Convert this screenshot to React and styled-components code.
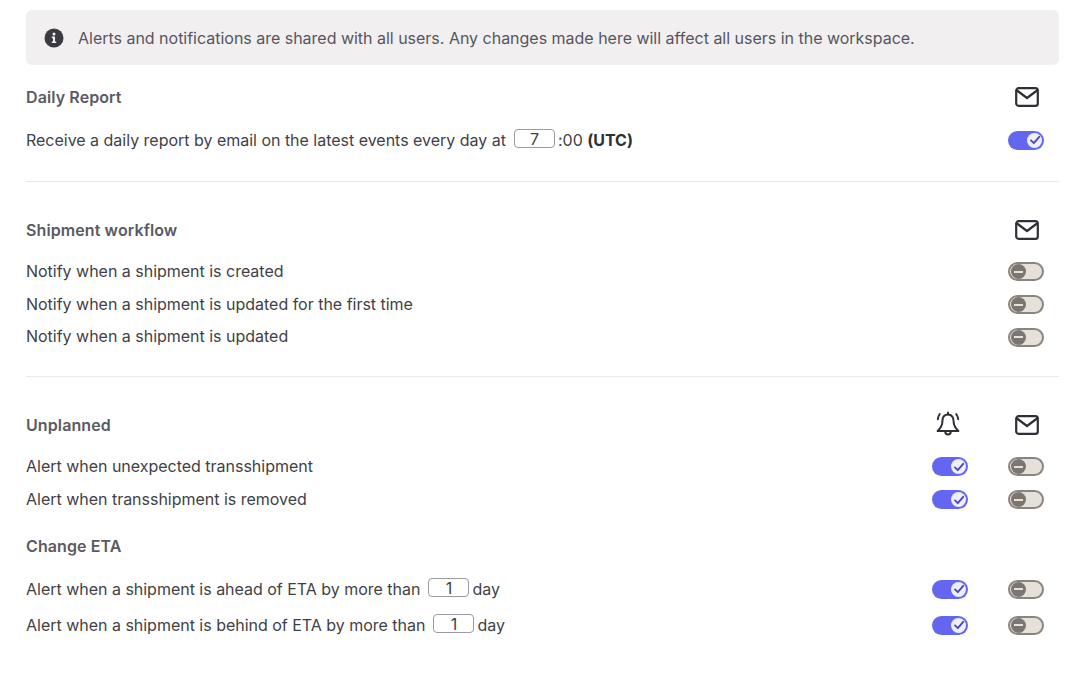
import React from 'react';
import styled, { createGlobalStyle } from 'styled-components';

const GlobalStyle = createGlobalStyle`
  html, body {
    margin: 0;
    padding: 0;
    background: #fff;
    font-family: Inter, "Liberation Sans", sans-serif;
  }
`;

function MailIcon() {
  return (
    <MailSvg width="24" height="20" viewBox="0 0 24 20" fill="none" stroke="#2f2f35" strokeWidth="2.2" strokeLinejoin="round" strokeLinecap="round">
      <rect x="1.2" y="1.2" width="21.6" height="17.6" rx="2.4" />
      <path d="M2 3.5 L12 11 L22 3.5" />
    </MailSvg>
  );
}

function BellIcon() {
  return (
    <BellSvg width="26" height="26" viewBox="0 0 26 26" fill="none" stroke="#2f2f35" strokeWidth="2" strokeLinejoin="round" strokeLinecap="round">
      <path d="M13 3.6 C9 3.6 7.4 6.8 7.4 10.4 C7.4 14.6 5.6 17 2.6 20 H23.4 C20.4 17 18.6 14.6 18.6 10.4 C18.6 6.8 17 3.6 13 3.6 Z" />
      <path d="M13 1.4 V3.6" />
      <path d="M10.2 20.2 C10.2 24.6 15.8 24.6 15.8 20.2" />
      <path d="M4.8 3 C3.6 4.6 3 6.2 2.8 8.2" />
      <path d="M21.2 3 C22.4 4.6 23 6.2 23.2 8.2" />
    </BellSvg>
  );
}

function InfoIcon() {
  return (
    <svg width="20" height="20" viewBox="0 0 20 20">
      <circle cx="10" cy="10" r="9.5" fill="#3a3a42" />
      <circle cx="10" cy="6" r="1.5" fill="#f1eff0" />
      <path d="M7.8 8.6 H11 V13.4 H12.2 V15 H7.8 V13.4 H9 V10.2 H7.8 Z" fill="#f1eff0" />
    </svg>
  );
}

function Toggle({ on }) {
  return (
    <ToggleTrack $on={on}>
      <ToggleKnob $on={on}>
        {on ? (
          <svg width="12" height="12" viewBox="0 0 12 12" fill="none" stroke="#4a45b8" strokeWidth="1.8" strokeLinecap="round" strokeLinejoin="round">
            <path d="M2 6.4 L4.8 9.2 L10.2 2.8" />
          </svg>
        ) : (
          <MinusBar />
        )}
      </ToggleKnob>
    </ToggleTrack>
  );
}

function Row({ children, bell, mail, h }) {
  return (
    <RowWrap $h={h}>
      <RowLabel>{children}</RowLabel>
      <Cell>{bell !== undefined && <Toggle on={bell} />}</Cell>
      <Cell>{mail !== undefined && <Toggle on={mail} />}</Cell>
    </RowWrap>
  );
}

function Heading({ children, bell, mail, h }) {
  return (
    <RowWrap $h={h}>
      <HeadingText>{children}</HeadingText>
      <Cell>{bell && <BellIcon />}</Cell>
      <Cell>{mail && <MailIcon />}</Cell>
    </RowWrap>
  );
}

export default function App() {
  return (
    <Page>
      <GlobalStyle />
      <Banner>
        <InfoIcon />
        <BannerText>Alerts and notifications are shared with all users. Any changes made here will affect all users in the workspace.</BannerText>
      </Banner>

      <Section $top={16} $bottom={26}>
        <Heading mail h={32}>Daily Report</Heading>
        <SubGap $h={10} />
        <Row mail={true} h={32}>
          Receive a daily report by email on the latest events every day at
          <NumBox $w={41}>7</NumBox>
          <Unit>:00</Unit> <Bold>(UTC)</Bold>
        </Row>
      </Section>

      <Section $top={32} $bottom={24}>
        <Heading mail h={32}>Shipment workflow</Heading>
        <SubGap $h={8} />
        <Row mail={false} h={33}>Notify when a shipment is created</Row>
        <Row mail={false} h={33}>Notify when a shipment is updated for the first time</Row>
        <Row mail={false} h={32}>Notify when a shipment is updated</Row>
      </Section>

      <Section $top={32} $bottom={0} $last>
        <Heading bell mail h={32}>Unplanned</Heading>
        <SubGap $h={8} />
        <Row bell={true} mail={false} h={33}>Alert when unexpected transshipment</Row>
        <Row bell={true} mail={false} h={33}>Alert when transshipment is removed</Row>
        <SubGap $h={15} />
        <Heading h={32}>Change ETA</Heading>
        <SubGap $h={8} />
        <Row bell={true} mail={false} h={36}>
          Alert when a shipment is ahead of ETA by more than
          <NumBox $w={41}>1</NumBox>
          <Unit>day</Unit>
        </Row>
        <Row bell={true} mail={false} h={36}>
          Alert when a shipment is behind of ETA by more than
          <NumBox $w={41}>1</NumBox>
          <Unit>day</Unit>
        </Row>
      </Section>
    </Page>
  );
}

const Page = styled.div`
  width: 1077px;
  height: 682px;
  box-sizing: border-box;
  padding: 10px 18px 0 26px;
  overflow: hidden;
  color: #3a3a42;
  font-size: 16px;
`;

const Banner = styled.div`
  display: flex;
  align-items: center;
  gap: 14px;
  height: 55px;
  box-sizing: border-box;
  padding: 0 18px;
  background: #f1eff0;
  border-radius: 6px;
`;

const BannerText = styled.span`
  font-size: 16px;
  letter-spacing: -0.015px;
  color: #56565e;
`;

const Section = styled.div`
  padding-top: ${(p) => p.$top}px;
  padding-bottom: ${(p) => p.$bottom}px;
  border-bottom: ${(p) => (p.$last ? 'none' : '1px solid #e9e9eb')};
`;

const SubGap = styled.div`
  height: ${(p) => p.$h}px;
`;

const RowWrap = styled.div`
  display: grid;
  grid-template-columns: 1fr 36px 36px;
  column-gap: 40px;
  align-items: center;
  height: ${(p) => p.$h}px;
  padding-right: 15px;
`;

const RowLabel = styled.div`
  font-size: 16px;
  letter-spacing: -0.015px;
  color: #3f3f47;
  white-space: nowrap;
`;

const HeadingText = styled.div`
  font-size: 16px;
  font-weight: 600;
  letter-spacing: 0.1px;
  color: #5a5a62;
`;

const Cell = styled.div`
  display: flex;
  justify-content: center;
  align-items: center;
`;

const MailSvg = styled.svg`
  margin-left: 1px;
`;

const BellSvg = styled.svg`
  margin-left: -4px;
  margin-top: -2px;
`;

const Bold = styled.b`
  font-weight: 700;
  color: #2f2f36;
`;

const NumBox = styled.span`
  display: inline-block;
  width: ${(p) => p.$w}px;
  height: 19px;
  line-height: 18px;
  margin-left: 8px;
  box-sizing: border-box;
  border: 1px solid #9a9aa2;
  border-radius: 4px;
  text-align: center;
  vertical-align: 1px;
  color: #3f3f47;
`;

const Unit = styled.span`
  margin-left: 3px;
`;

const ToggleTrack = styled.div`
  display: flex;
  align-items: center;
  justify-content: ${(p) => (p.$on ? 'flex-end' : 'flex-start')};
  width: 36px;
  height: 19px;
  margin-top: 2px;
  box-sizing: border-box;
  padding: 2px;
  border-radius: 10px;
  background: ${(p) => (p.$on ? '#6366f1' : '#e6e0db')};
  border: ${(p) => (p.$on ? 'none' : '2px solid #8c857f')};
`;

const ToggleKnob = styled.div`
  display: flex;
  align-items: center;
  justify-content: center;
  width: 15px;
  height: 15px;
  margin-left: ${(p) => (p.$on ? '0' : '-1px')};
  border-radius: 50%;
  background: ${(p) => (p.$on ? '#eeeefc' : '#7d7670')};
`;

const MinusBar = styled.div`
  width: 9px;
  height: 2px;
  background: #e6e0db;
`;
